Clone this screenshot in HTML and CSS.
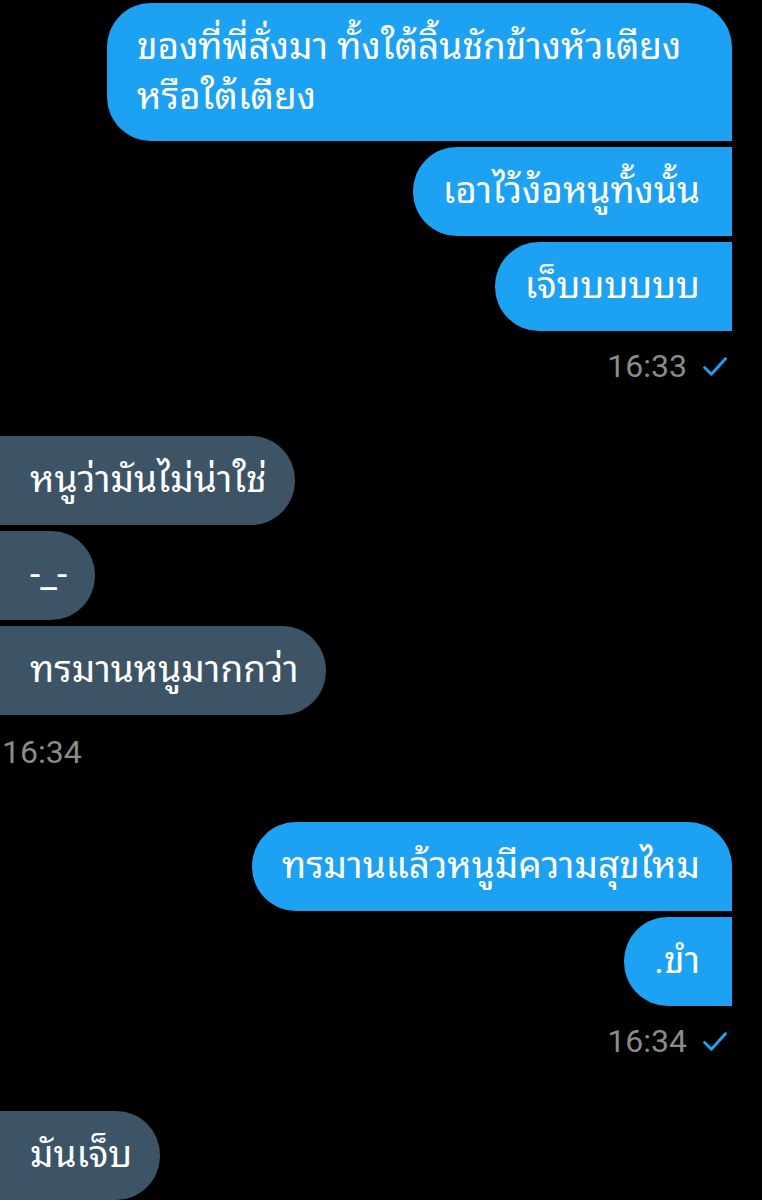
FILE: index.html
```html
<!DOCTYPE html>
<html lang="th">
<head>
<meta charset="utf-8">
<link rel="stylesheet" href="styles.css">
</head>
<body>
<main class="chat">
  <section class="group group-out">
    <div class="bubble out first wide">ของที่พี่สั่งมา ทั้งใต้ลิ้นชักข้างหัวเตียง<br>หรือใต้เตียง</div>
    <div class="bubble out">เอาไว้ง้อหนูทั้งนั้น</div>
    <div class="bubble out">เจ็บบบบบบ</div>
    <div class="meta">
      <span class="time">16:33</span>
      <svg class="check" viewBox="0 0 24 24" width="25" height="25"><path d="M2.5 13 L9 19.5 L22.5 4.5" fill="none" stroke="#1da1f2" stroke-width="2.8" stroke-linecap="round" stroke-linejoin="round"/></svg>
    </div>
  </section>

  <section class="group group-in">
    <div class="bubble in">หนูว่ามันไม่น่าใช่</div>
    <div class="bubble in">-_-</div>
    <div class="bubble in">ทรมานหนูมากกว่า</div>
    <div class="meta"><span class="time">16:34</span></div>
  </section>

  <section class="group group-out">
    <div class="bubble out first">ทรมานแล้วหนูมีความสุขไหม</div>
    <div class="bubble out">.ขำ</div>
    <div class="meta">
      <span class="time">16:34</span>
      <svg class="check" viewBox="0 0 24 24" width="25" height="25"><path d="M2.5 13 L9 19.5 L22.5 4.5" fill="none" stroke="#1da1f2" stroke-width="2.8" stroke-linecap="round" stroke-linejoin="round"/></svg>
    </div>
  </section>

  <section class="group group-in">
    <div class="bubble in">มันเจ็บ</div>
  </section>
</main>
</body>
</html>
```

FILE: styles.css
```css
html, body {
  margin: 0;
  padding: 0;
  background: #000;
}
body {
  font-family: Roboto, "Noto Sans Thai Looped", "Noto Sans", sans-serif;
  color: #fff;
  width: 762px;
  height: 1200px;
  overflow: hidden;
}
.chat {
  display: flex;
  flex-direction: column;
  gap: 52px;
  padding: 3px 30px 0 0;
}
.group {
  display: flex;
  flex-direction: column;
  gap: 6px;
}
.group-out { align-items: flex-end; }
.group-in { align-items: flex-start; }
.bubble {
  font-size: 37px;
  line-height: 50px;
  padding: 19px 32px 20px 30px;
  white-space: nowrap;
}
.bubble.out {
  background: #1da1f2;
  border-radius: 44px 0 0 44px;
}
.bubble.out.first {
  border-radius: 44px 44px 0 44px;
}
.bubble.wide {
  box-sizing: border-box;
  width: 625px;
  padding-bottom: 19px;
}
.bubble.in {
  background: #3d5466;
  border-radius: 0 44px 44px 0;
  padding-right: 28px;
}
.meta {
  display: flex;
  align-items: center;
  gap: 15px;
  margin-top: 11px;
  height: 36px;
}
.time {
  font-family: Roboto, sans-serif;
  font-size: 32px;
  line-height: 36px;
  color: #8b8b8b;
}
.check { margin-right: 5px; }
.group-in .meta {
  padding-left: 2px;
  margin-top: 13px;
}
```
